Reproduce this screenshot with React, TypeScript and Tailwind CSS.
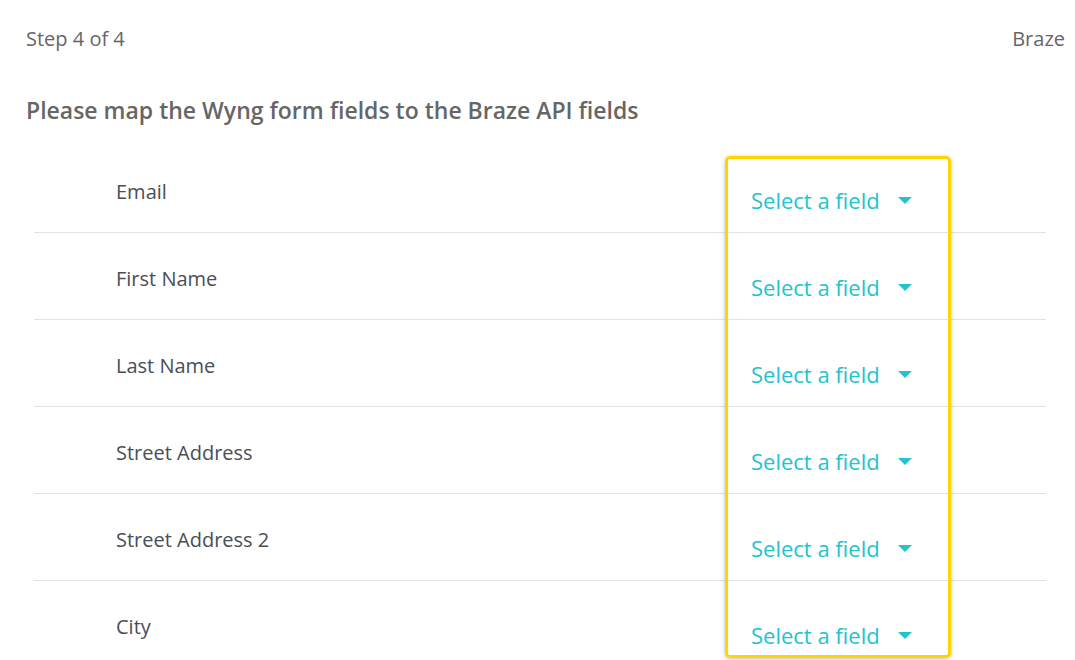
import React from "react";

const rows = ["Email", "First Name", "Last Name", "Street Address", "Street Address 2", "City"];

export default function App() {
  return (
    <div
      className="w-[1075px] h-[660px] bg-white overflow-hidden relative"
      style={{ fontFamily: "'Open Sans', Lato, sans-serif" }}
    >
      <div className="flex justify-between items-center pl-[26px] pr-[10px] pt-[26px]">
        <span className="text-[20px] text-[#666666] leading-[26px]">Step 4 of 4</span>
        <span className="text-[20px] text-[#666666] leading-[26px]">Braze</span>
      </div>
      <h1 className="pl-[26px] mt-[44px] text-[23px] font-semibold text-[#666666] leading-[28px]">
        Please map the Wyng form fields to the Braze API fields
      </h1>
      <div className="mt-[22px] ml-[34px] w-[1012px] flex flex-col">
        {rows.map((r) => (
          <div key={r} className="h-[87px] border-b border-[#e2e2e2] flex">
            <div className="w-[691px] pl-[82px] pt-[33px] text-[20px] text-[#4a4e57] leading-[26px]">{r}</div>
            <div className="pl-[26px] pt-[41px] flex items-start gap-[18px]">
              <span className="text-[22px] text-[#22c3d0] leading-[26px]">Select a field</span>
              <svg width="14" height="8" viewBox="0 0 14 8" className="mt-[10px]">
                <path d="M0 0 L14 0 L7 7 Z" fill="#22c3d0" />
              </svg>
            </div>
          </div>
        ))}
      </div>
      <div className="absolute left-[725px] top-[156px] w-[226px] h-[502px] border-[3px] border-[#ffd500] rounded-[5px] shadow-[0_1px_4px_rgba(0,0,0,0.25)]" />
    </div>
  );
}
